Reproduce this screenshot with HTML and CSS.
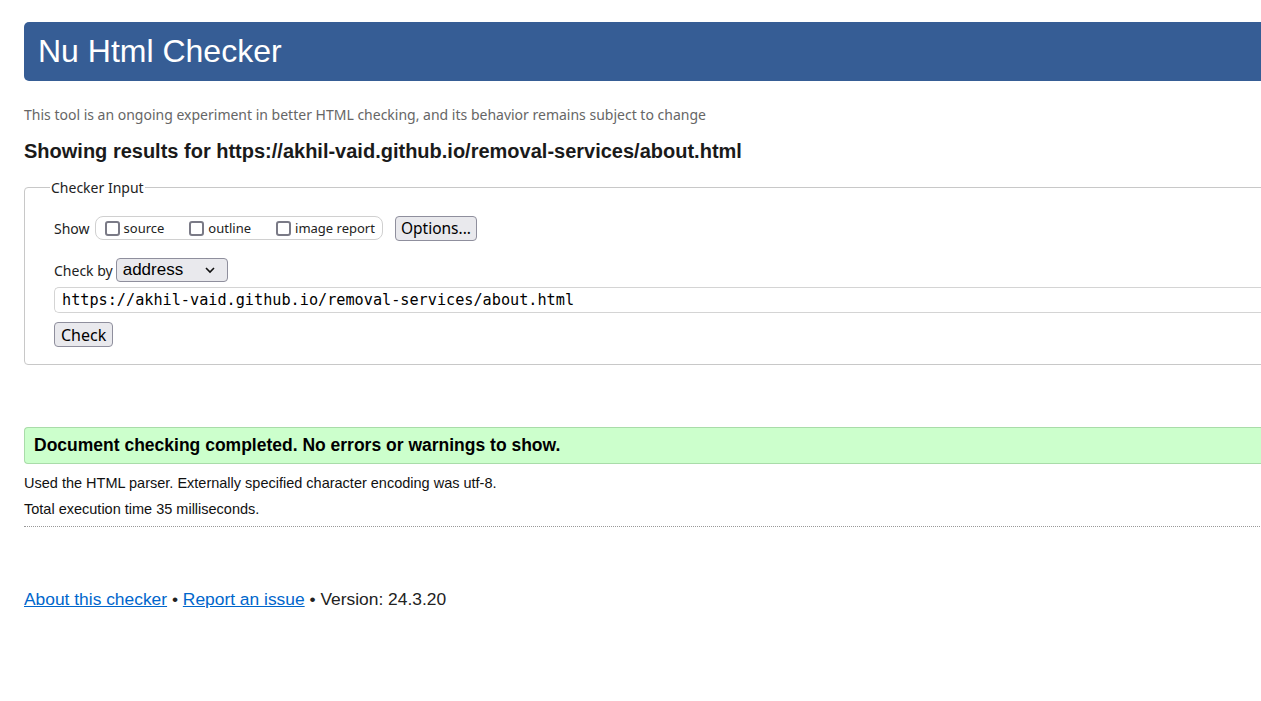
FILE: index.html
```html
<!DOCTYPE html>
<html lang="en">
<head>
<meta charset="utf-8">
<title>Nu Html Checker</title>
<link rel="stylesheet" href="styles.css">
</head>
<body>
<div class="page">
  <h1 class="banner">Nu Html Checker</h1>
  <p class="tagline">This tool is an ongoing experiment in better HTML checking, and its behavior remains subject to change</p>
  <h2 class="results">Showing results for https://akhil-vaid.github.io/removal-services/about.html</h2>

  <fieldset class="input-box">
    <legend>Checker Input</legend>
    <div class="row show-row">
      <span class="lbl">Show</span>
      <div class="opts">
        <label class="opt"><input type="checkbox"><span>source</span></label>
        <label class="opt"><input type="checkbox"><span>outline</span></label>
        <label class="opt"><input type="checkbox"><span>image report</span></label>
      </div>
      <button class="btn btn-options" type="button">Options...</button>
    </div>
    <div class="row checkby-row">
      <span class="lbl">Check by</span>
      <div class="select">
        <span>address</span>
        <svg width="12" height="8" viewBox="0 0 12 8"><path d="M2 2 L6 6 L10 2" fill="none" stroke="#111" stroke-width="1.6"/></svg>
      </div>
    </div>
    <div class="url">https://akhil-vaid.github.io/removal-services/about.html</div>
    <button class="btn btn-check" type="button">Check</button>
  </fieldset>

  <div class="success">Document checking completed. No errors or warnings to show.</div>
  <div class="details">
    <p class="info">Used the HTML parser. Externally specified character encoding was utf-8.</p>
    <p class="info">Total execution time 35 milliseconds.</p>
  </div>
  <hr class="dots">

  <p class="footer"><a href="#">About this checker</a> • <a href="#">Report an issue</a> • Version: 24.3.20</p>
</div>
</body>
</html>
```

FILE: styles.css
```css
html, body {
  margin: 0;
  padding: 0;
  overflow: hidden;
  background: #fff;
}
body {
  font-family: "Liberation Sans", Arial, sans-serif;
  color: #111;
}
.page {
  padding: 22px 0 0 24px;
  width: 1300px;
}
.banner {
  margin: 0;
  height: 59px;
  box-sizing: border-box;
  background: #365d95;
  color: #fff;
  font-weight: normal;
  font-size: 32px;
  line-height: 59px;
  padding-left: 14px;
  border-radius: 5px 0 0 5px;
}
.tagline {
  margin: 25px 0 0;
  font-family: "Noto Sans", "Open Sans", sans-serif;
  font-size: 14px;
  color: #666;
  line-height: 18px;
}
.results {
  margin: 15px 0 0;
  font-size: 20px;
  line-height: 24px;
  font-weight: bold;
  color: #1a1a1a;
}
.input-box {
  margin: 15px 0 0;
  border: 1px solid #c8c8c8;
  border-radius: 4px 0 0 4px;
  padding: 17px 0 17px 29px;
  font-family: "Noto Sans", "Open Sans", sans-serif;
  font-size: 14px;
}
.input-box legend {
  padding: 0 1px;
  margin-left: -4px;
  color: #222;
  font-size: 14px;
}
.row {
  display: flex;
  align-items: center;
}
.lbl {
  color: #222;
}
.show-row {
  height: 28px;
}
.opts {
  margin-left: 5px;
  display: flex;
  align-items: center;
  gap: 25px;
  border: 1px solid #d0d0d0;
  border-radius: 8px;
  height: 24px;
  box-sizing: border-box;
  padding: 0 7px 0 9px;
  font-size: 13px;
}
.opt {
  display: flex;
  align-items: center;
  gap: 4px;
  color: #222;
}
.opt input {
  appearance: none;
  -webkit-appearance: none;
  margin: 0;
  width: 15px;
  height: 15px;
  border: 2px solid #7a7a86;
  border-radius: 3px;
  box-sizing: border-box;
}
.btn {
  font-family: "Noto Sans", "Open Sans", sans-serif;
  font-size: 16px;
  background: #e9e9ed;
  border: 1px solid #8f8f9d;
  border-radius: 4px;
  color: #000;
  height: 25px;
  padding: 0 6px;
  line-height: 22px;
}
.btn-options {
  margin-left: 12px;
  font-size: 15.5px;
  padding: 0 5px;
}
.checkby-row {
  margin-top: 16px;
}
.select {
  margin-left: 3px;
  width: 112px;
  height: 24px;
  box-sizing: border-box;
  border: 1px solid #8f8f9d;
  border-radius: 4px;
  background: #e9e9ed;
  display: flex;
  align-items: center;
  justify-content: space-between;
  padding: 0 11px 0 6px;
  font-family: "Liberation Sans", Arial, sans-serif;
  font-size: 17px;
  color: #000;
}
.url {
  margin-top: 5px;
  height: 26px;
  box-sizing: border-box;
  border: 1px solid #d4d4d4;
  border-right: none;
  border-radius: 5px 0 0 5px;
  font-family: "DejaVu Sans Mono", "Liberation Mono", monospace;
  font-size: 15.2px;
  line-height: 24px;
  padding-left: 7px;
  color: #000;
}
.btn-check {
  margin-top: 9px;
  display: block;
}
.success {
  margin-top: 62px;
  height: 37px;
  box-sizing: border-box;
  background: #ccffcc;
  border: 1px solid #a9dca9;
  border-right: none;
  border-radius: 4px 0 0 4px;
  font-weight: bold;
  font-size: 17.5px;
  line-height: 35px;
  padding-left: 9px;
  color: #000;
}
.details {
  margin-top: 6px;
}
.info {
  margin: 0;
  font-size: 14.5px;
  line-height: 26px;
  color: #111;
}
.dots {
  margin: 4px 0 0;
  border: none;
  border-top: 1px dotted #999;
  height: 0;
}
.footer {
  margin: 61px 0 0;
  font-size: 17.4px;
  line-height: 22px;
  color: #222;
}
.footer a {
  color: #0066cc;
}
```
